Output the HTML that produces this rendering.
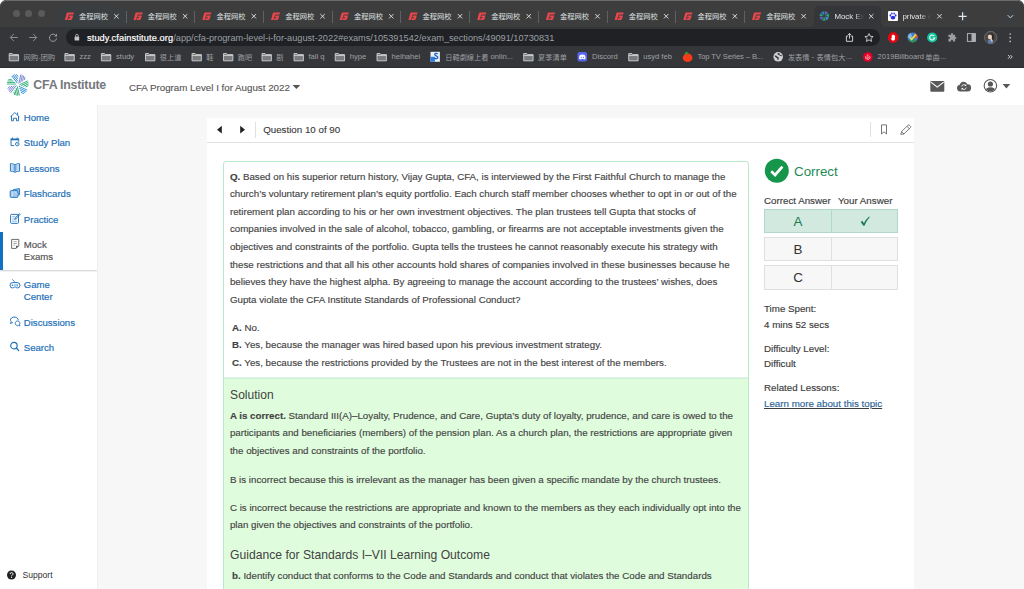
<!DOCTYPE html>
<html><head><meta charset="utf-8"><title>Mock Exams</title>
<style>
*{box-sizing:border-box}
html,body{margin:0;padding:0}
body{width:1024px;height:589px;overflow:hidden;position:relative;background:#fff;font-family:"Liberation Sans",sans-serif;font-size:9.75px;color:#333}
.ab,.cj,.t{position:absolute}
.t{white-space:nowrap;line-height:12px}
svg{display:block;overflow:visible}
.cj text{font-family:"Liberation Sans","Noto Sans CJK SC",sans-serif;font-size:100px}
#win{position:absolute;left:0;top:0;width:1024px;height:69px;background:linear-gradient(#35363a,#35363a 67px,#2a2b2e 67px,#2a2b2e 68px,#bdbdbf 68px);border-radius:6.500px 6.500px 0 0;overflow:hidden}
#hl{position:absolute;left:0;top:0;width:1024px;height:20px;border-radius:6.500px 6.500px 0 0;box-shadow:inset 0 1px 0 #6c6c6c}
#strip{position:absolute;left:0;top:0;width:1024px;height:26.5px;background:#3d3d3d}
.sep{position:absolute;top:10.7px;width:1px;height:12px;background:#5f6164}
.tl{position:absolute;top:10px;width:7.4px;height:7.4px;border-radius:50%;background:#5a5a5a}
.bk{position:absolute;top:51px;line-height:12px;font-size:7.6px;color:#9fa1a4;white-space:nowrap}
.fd{position:absolute;top:52.6px}
</style></head><body>
<svg width="0" height="0" style="position:absolute"><defs>
<path id="jc" d="M30 0H96L90 21H42L26 78H0L17 14Q21 0 30 0ZM46 31H88L78 66Q75 78 64 78H32L37 60H56L60 48H41Z" fill="#e9474c"/>
<path id="xx" d="M6 6L50 50M50 6L6 50" stroke="#dfe0e1" stroke-width="9.5" fill="none"/>
<g id="fold"><path d="M5 5h30l8 10h52v60H5z" fill="#797b7e" stroke="#cdcecf" stroke-width="9" stroke-linejoin="round"/><path d="M5 24h90" stroke="#cdcecf" stroke-width="9"/></g>
</defs></svg>

<!-- ================= browser chrome ================= -->
<div id="win">
<div id="strip"></div><div id="hl"></div>
<div class="ab" style="left:57px;top:6px;width:69px;height:21px;background:#3b3e41;border-radius:5px 5px 0 0"></div>
<div class="ab" style="left:813.5px;top:6px;width:67.2px;height:21px;background:#35363a;border-radius:5px 5px 0 0"></div><div class="ab" style="left:808.5px;top:21.500px;width:5px;height:5px;background:radial-gradient(circle at 0 0,rgba(53,54,58,0) 4.600px,#35363a 5.200px)"></div><div class="ab" style="left:880.700px;top:21.500px;width:5px;height:5px;background:radial-gradient(circle at 100% 0,rgba(53,54,58,0) 4.600px,#35363a 5.200px)"></div>
<i class="tl" style="left:12.7px"></i><i class="tl" style="left:25.1px"></i><i class="tl" style="left:37.5px"></i>
<svg class="ab" style="left:64px;top:12px;transform:translate(0.7px,0.6px)" width="9.4" height="7.4" viewBox="0 0 96 78"><use href="#jc"/></svg><svg class="cj" style="left:79px;top:12px;transform:translate(0px,0.6px)" width="29" height="7.25" viewBox="0 0 400 100" fill="#dfe0e1"><text x="0" y="88">金程网校</text></svg><svg class="ab" style="left:113px;top:13px;transform:translate(0.6px,0.45px)" width="5.6" height="5.6" viewBox="0 0 56 56"><use href="#xx"/></svg><i class="sep" style="left:125.5px"></i><svg class="ab" style="left:133px;top:12px;transform:translate(0.42px,0.6px)" width="9.4" height="7.4" viewBox="0 0 96 78"><use href="#jc"/></svg><svg class="cj" style="left:147px;top:12px;transform:translate(0.72px,0.6px)" width="29" height="7.25" viewBox="0 0 400 100" fill="#dfe0e1"><text x="0" y="88">金程网校</text></svg><svg class="ab" style="left:182px;top:13px;transform:translate(0.32px,0.45px)" width="5.6" height="5.6" viewBox="0 0 56 56"><use href="#xx"/></svg><i class="sep" style="left:194.22px"></i><svg class="ab" style="left:202px;top:12px;transform:translate(0.14px,0.6px)" width="9.4" height="7.4" viewBox="0 0 96 78"><use href="#jc"/></svg><svg class="cj" style="left:216px;top:12px;transform:translate(0.44px,0.6px)" width="29" height="7.25" viewBox="0 0 400 100" fill="#dfe0e1"><text x="0" y="88">金程网校</text></svg><svg class="ab" style="left:251px;top:13px;transform:translate(0.04px,0.45px)" width="5.6" height="5.6" viewBox="0 0 56 56"><use href="#xx"/></svg><i class="sep" style="left:262.94px"></i><svg class="ab" style="left:270px;top:12px;transform:translate(0.86px,0.6px)" width="9.4" height="7.4" viewBox="0 0 96 78"><use href="#jc"/></svg><svg class="cj" style="left:285px;top:12px;transform:translate(0.16px,0.6px)" width="29" height="7.25" viewBox="0 0 400 100" fill="#dfe0e1"><text x="0" y="88">金程网校</text></svg><svg class="ab" style="left:319px;top:13px;transform:translate(0.76px,0.45px)" width="5.6" height="5.6" viewBox="0 0 56 56"><use href="#xx"/></svg><i class="sep" style="left:331.66px"></i><svg class="ab" style="left:339px;top:12px;transform:translate(0.58px,0.6px)" width="9.4" height="7.4" viewBox="0 0 96 78"><use href="#jc"/></svg><svg class="cj" style="left:353px;top:12px;transform:translate(0.88px,0.6px)" width="29" height="7.25" viewBox="0 0 400 100" fill="#dfe0e1"><text x="0" y="88">金程网校</text></svg><svg class="ab" style="left:388px;top:13px;transform:translate(0.48px,0.45px)" width="5.6" height="5.6" viewBox="0 0 56 56"><use href="#xx"/></svg><i class="sep" style="left:400.38px"></i><svg class="ab" style="left:408px;top:12px;transform:translate(0.3px,0.6px)" width="9.4" height="7.4" viewBox="0 0 96 78"><use href="#jc"/></svg><svg class="cj" style="left:422px;top:12px;transform:translate(0.6px,0.6px)" width="29" height="7.25" viewBox="0 0 400 100" fill="#dfe0e1"><text x="0" y="88">金程网校</text></svg><svg class="ab" style="left:457px;top:13px;transform:translate(0.2px,0.45px)" width="5.6" height="5.6" viewBox="0 0 56 56"><use href="#xx"/></svg><i class="sep" style="left:469.1px"></i><svg class="ab" style="left:477px;top:12px;transform:translate(0.02px,0.6px)" width="9.4" height="7.4" viewBox="0 0 96 78"><use href="#jc"/></svg><svg class="cj" style="left:491px;top:12px;transform:translate(0.32px,0.6px)" width="29" height="7.25" viewBox="0 0 400 100" fill="#dfe0e1"><text x="0" y="88">金程网校</text></svg><svg class="ab" style="left:525px;top:13px;transform:translate(0.92px,0.45px)" width="5.6" height="5.6" viewBox="0 0 56 56"><use href="#xx"/></svg><i class="sep" style="left:537.82px"></i><svg class="ab" style="left:545px;top:12px;transform:translate(0.74px,0.6px)" width="9.4" height="7.4" viewBox="0 0 96 78"><use href="#jc"/></svg><svg class="cj" style="left:560px;top:12px;transform:translate(0.04px,0.6px)" width="29" height="7.25" viewBox="0 0 400 100" fill="#dfe0e1"><text x="0" y="88">金程网校</text></svg><svg class="ab" style="left:594px;top:13px;transform:translate(0.64px,0.45px)" width="5.6" height="5.6" viewBox="0 0 56 56"><use href="#xx"/></svg><i class="sep" style="left:606.54px"></i><svg class="ab" style="left:614px;top:12px;transform:translate(0.46px,0.6px)" width="9.4" height="7.4" viewBox="0 0 96 78"><use href="#jc"/></svg><svg class="cj" style="left:628px;top:12px;transform:translate(0.76px,0.6px)" width="29" height="7.25" viewBox="0 0 400 100" fill="#dfe0e1"><text x="0" y="88">金程网校</text></svg><svg class="ab" style="left:663px;top:13px;transform:translate(0.36px,0.45px)" width="5.6" height="5.6" viewBox="0 0 56 56"><use href="#xx"/></svg><i class="sep" style="left:675.26px"></i><svg class="ab" style="left:683px;top:12px;transform:translate(0.18px,0.6px)" width="9.4" height="7.4" viewBox="0 0 96 78"><use href="#jc"/></svg><svg class="cj" style="left:697px;top:12px;transform:translate(0.48px,0.6px)" width="29" height="7.25" viewBox="0 0 400 100" fill="#dfe0e1"><text x="0" y="88">金程网校</text></svg><svg class="ab" style="left:732px;top:13px;transform:translate(0.08px,0.45px)" width="5.6" height="5.6" viewBox="0 0 56 56"><use href="#xx"/></svg><i class="sep" style="left:743.98px"></i><svg class="ab" style="left:751px;top:12px;transform:translate(0.9px,0.6px)" width="9.4" height="7.4" viewBox="0 0 96 78"><use href="#jc"/></svg><svg class="cj" style="left:766px;top:12px;transform:translate(0.2px,0.6px)" width="29" height="7.25" viewBox="0 0 400 100" fill="#dfe0e1"><text x="0" y="88">金程网校</text></svg><svg class="ab" style="left:800px;top:13px;transform:translate(0.8px,0.45px)" width="5.6" height="5.6" viewBox="0 0 56 56"><use href="#xx"/></svg>
<!-- active tab -->
<svg class="ab" style="left:819px;top:11px;transform:translate(0.6px,0.2px)" width="9.6" height="9.6" viewBox="0 0 20 20"><path d="M8.20 10.13L0.02 10.70A10 10 0 0 1 2.34 3.57Z" fill="#2e9d72"/><path d="M8.78 8.67L3.23 2.64A10 10 0 0 1 10.25 0.00Z" fill="#2f7fc6"/><path d="M10.28 8.22L11.54 0.12A10 10 0 0 1 17.97 3.96Z" fill="#5b67b8"/><path d="M11.56 9.11L18.69 5.04A10 10 0 0 1 19.69 12.47Z" fill="#2e9d72"/><path d="M11.67 10.67L19.29 13.70A10 10 0 0 1 14.11 19.12Z" fill="#3a8fd6"/><path d="M10.52 11.72L12.90 19.57A10 10 0 0 1 5.44 18.90Z" fill="#2e9d72"/><path d="M8.98 11.48L4.33 18.23A10 10 0 0 1 0.20 11.98Z" fill="#5b67b8"/></svg>
<div class="t" style="left:834.4px;top:10.8px;font-size:7.9px;color:#e4e5e6;width:30px;overflow:hidden;-webkit-mask-image:linear-gradient(90deg,#000 68%,transparent 100%);mask-image:linear-gradient(90deg,#000 68%,transparent 100%)">Mock Exa</div>
<svg class="ab" style="left:868px;top:13px;transform:translate(0.4px,0.45px)" width="5.6" height="5.6" viewBox="0 0 56 56"><use href="#xx"/></svg>
<!-- private tab -->
<svg class="ab" style="left:888px;top:11px" width="10" height="10" viewBox="0 0 20 20"><rect width="20" height="20" rx="2" fill="#fff"/><g fill="#2932e1"><ellipse cx="10" cy="13.3" rx="4.6" ry="3.6"/><ellipse cx="4.6" cy="9" rx="1.7" ry="2.3"/><ellipse cx="15.4" cy="9" rx="1.7" ry="2.3"/><ellipse cx="7.7" cy="5.2" rx="1.6" ry="2.2"/><ellipse cx="12.3" cy="5.2" rx="1.6" ry="2.2"/></g></svg>
<div class="t" style="left:902.4px;top:10.8px;font-size:7.9px;color:#e4e5e6;width:29px;overflow:hidden;-webkit-mask-image:linear-gradient(90deg,#000 62%,transparent 100%);mask-image:linear-gradient(90deg,#000 62%,transparent 100%)">private c</div>
<svg class="ab" style="left:936px;top:13px;transform:translate(0.7px,0.45px)" width="5.6" height="5.6" viewBox="0 0 56 56"><use href="#xx"/></svg>
<!-- new tab / chevron -->
<div class="ab" style="left:955.6px;top:9.3px;width:14px;height:14px;border-radius:50%;background:#3b3e41"></div>
<svg class="ab" style="left:958px;top:12px;transform:translate(0.6px,0.3px)" width="8" height="8" viewBox="0 0 8 8"><path d="M4 0V8M0 4H8" stroke="#e4e5e6" stroke-width="1.2" fill="none"/></svg>
<div class="ab" style="left:1002.9px;top:8.5px;width:15px;height:15px;border-radius:50%;background:#3b3e41"></div>
<svg class="ab" style="left:1007px;top:14px;transform:translate(0.4px,0.9px)" width="6" height="3.6" viewBox="0 0 6 3.6"><path d="M.3 .3L3 3L5.7 .3" stroke="#d5d6d8" stroke-width="1" fill="none"/></svg>

<!-- toolbar -->
<svg class="ab" style="left:9px;top:33px;transform:translate(0.6px,0.4px)" width="8.4" height="8.2" viewBox="0 0 8.4 8.2"><path d="M8.2 4.1H.8M4.3 .5L.7 4.1L4.3 7.7" stroke="#8f9194" stroke-width="1" fill="none"/></svg>
<svg class="ab" style="left:29px;top:33px;transform:translate(0px,0.4px)" width="8.4" height="8.2" viewBox="0 0 8.4 8.2"><path d="M.2 4.1H7.6M4.1 .5L7.7 4.1L4.1 7.7" stroke="#8f9194" stroke-width="1" fill="none"/></svg>
<svg class="ab" style="left:48px;top:33px;transform:translate(0.6px,0px)" width="9" height="9" viewBox="0 0 9 9"><path d="M7.6 3A3.6 3.6 0 1 0 8 5.4" stroke="#9a9c9f" stroke-width="1" fill="none"/><path d="M8.4 .6V3.4H5.6Z" fill="#9a9c9f"/></svg>
<div class="ab" style="left:66px;top:29px;width:813.8px;height:17px;border-radius:8.5px;background:#202124"></div>
<svg class="ab" style="left:74px;top:33px;transform:translate(0.6px,0.4px)" width="4.6" height="7.4" viewBox="0 0 4.6 7.4"><path d="M1 3.2V2.2A1.3 1.3 0 0 1 3.6 2.2V3.2" stroke="#c3c5c8" stroke-width=".8" fill="none"/><rect x="0" y="3" width="4.6" height="4.2" rx=".5" fill="#c3c5c8"/></svg>
<div class="t" id="url" style="left:87px;top:31.5px;font-size:9.200px;color:#9aa0a6;letter-spacing:0"><span style="color:#fff;letter-spacing:.12px;-webkit-text-stroke:.2px #fff">study.cfainstitute.org</span>/app/cfa-program-level-i-for-august-2022#exams/105391542/exam_sections/49091/10730831</div>
<!-- share -->
<svg class="ab" style="left:845px;top:32px;transform:translate(0.9px,0.9px)" width="7.200" height="8.900" viewBox="0 0 7.6 9.4"><path d="M2.4 3.4H.5V8.9H7.1V3.4H5.2M3.8 6V.8M2 2.4L3.8 .6L5.6 2.4" stroke="#dcdde0" stroke-width=".95" fill="none"/></svg>
<!-- star -->
<svg class="ab" style="left:864px;top:32px;transform:translate(0.2px,0.7px)" width="9.6" height="9.2" viewBox="0 0 24 23"><path d="M12 2.2L15 9l7.3.7-5.5 4.9 1.6 7.2L12 18l-6.4 3.8 1.6-7.2L1.7 9.7 9 9z" stroke="#dcdde0" stroke-width="2.100" fill="none" stroke-linejoin="round"/></svg>
<!-- ext icons -->
<svg class="ab" style="left:888px;top:32px;transform:translate(0px,0.3px)" width="10.4" height="10.4" viewBox="0 0 20 20"><path d="M6 0h8l6 6v8l-6 6H6l-6-6V6z" fill="#e30613"/><path d="M7.2 10V6.2a.8.8 0 0 1 1.6 0V4.8a.8.8 0 0 1 1.6 0V5.4a.8.8 0 0 1 1.6 0V6.6a.8.8 0 0 1 1.6 0V12c0 2.4-1.4 4-3.6 4-2 0-2.8-1-4.6-4.2.6-.8 1.2-.6 1.8.2z" fill="#fff"/></svg>
<svg class="ab" style="left:907px;top:32px;transform:translate(0.6px,0.4px)" width="10.2" height="10.2" viewBox="0 0 20 20"><circle cx="10" cy="10" r="10" fill="#3b7dd8"/><path d="M0 10a10 10 0 0 1 6-9l4 9z" fill="#7fb4e8"/><path d="M14 1.2a10 10 0 0 1 6 8.800l-8 2z" fill="#e8552d"/><path d="M3 17a10 10 0 0 0 14 0l-7-5z" fill="#2f8f4e"/><path d="M4 9.500l4 4.500 8-10" stroke="#d9e94a" stroke-width="3.200" fill="none"/></svg>
<svg class="ab" style="left:927px;top:32px;transform:translate(0.1px,0.4px)" width="10.2" height="10.2" viewBox="0 0 20 20"><circle cx="10" cy="10" r="10" fill="#15c39a"/><path d="M14.300 7.200A5 5 0 1 0 15 11H11" stroke="#fff" stroke-width="2" fill="none"/></svg>
<svg class="ab" style="left:947px;top:32px;transform:translate(0.2px,0.8px)" width="9.6" height="9.6" viewBox="0 0 20 20"><path d="M8 2.500a2 2 0 0 1 4 0V4h4.500v4.500h1a2 2 0 0 1 0 4h-1V18H12v-1.500a2 2 0 0 0-4 0V18H2.500v-5.500H4a2 2 0 0 0 0-4H2.500V4H8z" fill="#9a9c9f"/></svg>
<svg class="ab" style="left:966px;top:33px;transform:translate(0.9px,0.1px)" width="9" height="8.800" viewBox="0 0 9 8.800"><rect x=".5" y=".5" width="8" height="7.800" fill="none" stroke="#aeb0b3" stroke-width="1"/><rect x="4.600" y=".5" width="4" height="7.800" fill="#aeb0b3"/></svg>
<svg class="ab" style="left:984px;top:31px;transform:translate(0.2px,0px)" width="13" height="13" viewBox="0 0 26 26"><circle cx="13" cy="13" r="12.500" fill="#4a4744" stroke="#8a8a8a" stroke-width="1"/><path d="M9 6c3-3 9-2 10 3 1 3 0 6-1 9l-6 1c-3-2-5-8-3-13z" fill="#2b2624"/><ellipse cx="11.500" cy="12" rx="4.200" ry="4.800" fill="#ecd2c0"/><path d="M7 19c3-2.500 8-2.500 11 0l-1 6H9z" fill="#5d7fb8"/><path d="M12 15.500l3 6 2-1-2-6z" fill="#ecd2c0"/></svg>
<svg class="ab" style="left:1009px;top:33px;transform:translate(0.2px,0px)" width="2" height="9.400" viewBox="0 0 2 9.400"><circle cx="1" cy="1" r=".85" fill="#b9babd"/><circle cx="1" cy="4.700" r=".85" fill="#b9babd"/><circle cx="1" cy="8.400" r=".85" fill="#b9babd"/></svg>

<!-- bookmarks bar -->
<svg class="fd" style="left:8px;transform:translate(0.7px,0px)" width="10.400" height="8.400" viewBox="0 0 100 80"><use href="#fold"/></svg>
<svg class="cj" style="left:23px;top:53px;transform:translate(0.4px,0.3px)" width="14.8" height="7.4" viewBox="0 0 200 100" fill="#9d9fa2"><text x="0" y="88">网购</text></svg><div class="bk" style="left:38.400px">.</div><svg class="cj" style="left:40px;top:53px;transform:translate(0.4px,0.3px)" width="14.8" height="7.4" viewBox="0 0 200 100" fill="#9d9fa2"><text x="0" y="88">团购</text></svg>
<svg class="fd" style="left:64px;transform:translate(0.4px,0px)" width="10.400" height="8.400" viewBox="0 0 100 80"><use href="#fold"/></svg>
<div class="bk" style="left:79.500px">zzz</div>
<svg class="fd" style="left:100px;transform:translate(0.9px,0px)" width="10.400" height="8.400" viewBox="0 0 100 80"><use href="#fold"/></svg>
<div class="bk" style="left:116px">study</div>
<svg class="fd" style="left:145px" width="10.400" height="8.400" viewBox="0 0 100 80"><use href="#fold"/></svg>
<svg class="cj" style="left:159px;top:53px;transform:translate(0.8px,0.3px)" width="21.6" height="7.2" viewBox="0 0 300 100" fill="#9d9fa2"><text x="0" y="88">很上道</text></svg>
<svg class="fd" style="left:191px;transform:translate(0.5px,0px)" width="10.400" height="8.400" viewBox="0 0 100 80"><use href="#fold"/></svg>
<svg class="cj" style="left:206px;top:53px;transform:translate(0.3px,0.3px)" width="7.2" height="7.2" viewBox="0 0 100 100" fill="#9d9fa2"><text x="0" y="88">鞋</text></svg>
<svg class="fd" style="left:223px" width="10.400" height="8.400" viewBox="0 0 100 80"><use href="#fold"/></svg>
<svg class="cj" style="left:237px;top:53px;transform:translate(0.8px,0.3px)" width="14.4" height="7.2" viewBox="0 0 200 100" fill="#9d9fa2"><text x="0" y="88">跑吧</text></svg>
<svg class="fd" style="left:261px;transform:translate(0.5px,0px)" width="10.400" height="8.400" viewBox="0 0 100 80"><use href="#fold"/></svg>
<svg class="cj" style="left:276px;top:53px;transform:translate(0.3px,0.3px)" width="7.2" height="7.2" viewBox="0 0 100 100" fill="#9d9fa2"><text x="0" y="88">剧</text></svg>
<svg class="fd" style="left:293px;transform:translate(0.5px,0px)" width="10.400" height="8.400" viewBox="0 0 100 80"><use href="#fold"/></svg>
<div class="bk" style="left:308.500px">fall q</div>
<svg class="fd" style="left:334px;transform:translate(0.7px,0px)" width="10.400" height="8.400" viewBox="0 0 100 80"><use href="#fold"/></svg>
<div class="bk" style="left:349.700px">hype</div>
<svg class="fd" style="left:376px;transform:translate(0.5px,0px)" width="10.400" height="8.400" viewBox="0 0 100 80"><use href="#fold"/></svg>
<div class="bk" style="left:391.500px">heihahei</div>
<svg class="ab" style="left:430px;top:51px;transform:translate(0.5px,0.8px)" width="9.400" height="10" viewBox="0 0 9.400 10"><rect width="9.400" height="10" fill="#e9f1fb"/><rect x="0" y="5" width="4.400" height="5" fill="#2b7de0"/><path d="M7.200 2.200C6.200 1.200 4.200 1.400 4.200 2.800C4.200 4.400 7.300 3.800 7.300 5.600C7.300 7.200 5 7.300 3.900 6.300" stroke="#1f5fbf" stroke-width="1.300" fill="none"/></svg>
<svg class="cj" style="left:445px;top:53px;transform:translate(0.3px,0.3px)" width="43.2" height="7.2" viewBox="0 0 600 100" fill="#9d9fa2"><text x="0" y="88">日韓劇線上看</text></svg><div class="bk" style="left:490.600px">onlin...</div>
<svg class="fd" style="left:523px;transform:translate(0.2px,0px)" width="10.400" height="8.400" viewBox="0 0 100 80"><use href="#fold"/></svg>
<svg class="cj" style="left:538px;top:53px;transform:translate(0.1px,0.3px)" width="28.8" height="7.2" viewBox="0 0 400 100" fill="#9d9fa2"><text x="0" y="88">夏季清单</text></svg>
<svg class="ab" style="left:577px;top:52px;transform:translate(0.5px,0px)" width="9.600" height="9.600" viewBox="0 0 20 20"><rect width="20" height="20" rx="4.500" fill="#5865f2"/><path d="M5 6.500c3-1.600 7-1.600 10 0 1.400 2.300 2 5 1.800 7.500-1.200 1-2.400 1.400-3.500 1.600l-.8-1.400c-1.600.5-3.400.5-5 0l-.8 1.400C5.600 15.400 4.400 15 3.200 14 3 11.500 3.600 8.800 5 6.500z" fill="#fff"/><circle cx="7.700" cy="11" r="1.300" fill="#5865f2"/><circle cx="12.300" cy="11" r="1.300" fill="#5865f2"/></svg>
<div class="bk" style="left:592px">Discord</div>
<svg class="fd" style="left:628px;transform:translate(0.2px,0px)" width="10.400" height="8.400" viewBox="0 0 100 80"><use href="#fold"/></svg>
<div class="bk" style="left:643.200px">usyd feb</div>
<svg class="ab" style="left:682px;top:51px;transform:translate(0.6px,0.6px)" width="10" height="10.400" viewBox="0 0 20 21"><ellipse cx="10" cy="12.400" rx="9.800" ry="8.600" fill="#f23c1a"/><path d="M3.500 4.500Q6 1 8.500 .5Q10 2 12.500 3Q10.500 5.500 8 5Q5.500 6.500 3.500 4.500Z" fill="#2f9a3a"/></svg>
<div class="bk" style="left:697.500px;letter-spacing:-.1px">Top TV Series – B...</div>
<svg class="ab" style="left:773px;top:52px;transform:translate(0.4px,0px)" width="9.600" height="9.600" viewBox="0 0 20 20"><circle cx="10" cy="10" r="10" fill="#cfd1d3"/><path d="M2.500 7.500Q5 6.500 6.500 8T9.500 10.500Q12 11 11.500 13T9.500 17Q8 16 8 14T5 11.500Q2.500 10 2.500 7.500ZM9 2Q11 1.500 13 2.500Q12 4.500 13.500 5.500T17 6.500Q18 8.500 17 9Q14.500 9 13 7.500T9.500 5.500Q8 4 9 2Z" fill="#3a3b3f"/></svg>
<svg class="cj" style="left:787px;top:53px;transform:translate(0.9px,0.3px)" width="21.6" height="7.2" viewBox="0 0 300 100" fill="#9d9fa2"><text x="0" y="88">发表情</text></svg><div class="bk" style="left:811.400px">-</div><svg class="cj" style="left:816px;top:53px;transform:translate(0.6px,0.3px)" width="28.8" height="7.2" viewBox="0 0 400 100" fill="#9d9fa2"><text x="0" y="88">表情包大</text></svg><div class="bk" style="left:845.800px">...</div>
<svg class="ab" style="left:863px;top:52px;transform:translate(0px,0.2px)" width="9.600" height="9.600" viewBox="0 0 20 20"><circle cx="10" cy="10" r="10" fill="#e60026"/><path d="M10 4.500v5.500M7 7.500c-2 1.500-2 5 0 6.500 1.800 1.300 4.200 1.300 6 0 2-1.500 2-5 0-6.500M8 10.500c0 3 4 3 4 0" stroke="#fff" stroke-width="1.400" fill="none"/></svg>
<div class="bk" style="left:877.600px">2019Billboard</div><svg class="cj" style="left:925px;top:53px;transform:translate(0.3px,0.3px)" width="14.4" height="7.2" viewBox="0 0 200 100" fill="#9d9fa2"><text x="0" y="88">单曲</text></svg><div class="bk" style="left:939.900px">...</div>
<svg class="ab" style="left:1007px;top:54px;transform:translate(0.6px,0.6px)" width="5" height="4.600" viewBox="0 0 5 4.600"><path d="M.4 .4L2.200 2.300L.4 4.200M2.800 .4L4.600 2.300L2.800 4.200" stroke="#dcdde0" stroke-width=".9" fill="none"/></svg>
</div>

<!-- ================= page ================= -->
<div id="page">
<style>
#hdr{position:absolute;left:0;top:68px;width:1024px;height:37px;background:#fff}
#side{position:absolute;left:0;top:105px;width:98px;height:484px;background:#fff;border-right:1px solid #f0f0f0}
#main{position:absolute;left:98px;top:105px;width:926px;height:484px;background:#f7f7f7}
#panel{position:absolute;left:207.300px;top:118.200px;width:706.500px;height:480px;background:#fff}
.nv{position:absolute;left:23.800px;color:#1b6fb7;line-height:12.300px;white-space:nowrap;font-size:9.600px;-webkit-text-stroke:.18px #1b6fb7}
.ni{position:absolute;left:10.200px}
.q{position:absolute;left:229.900px;white-space:nowrap;line-height:17.560px;font-size:9.750px;color:#444;-webkit-text-stroke:.15px #444}
.r{position:absolute;left:764px;white-space:nowrap;line-height:12px;font-size:9.750px;color:#3c3c3c;-webkit-text-stroke:.15px #3c3c3c}
.cell{position:absolute;height:24.400px;border:1px solid #e0e0e0;background:#f7f7f7;text-align:center;font-size:13.400px;line-height:23.600px;color:#333}
b{font-weight:bold}
</style>
<div id="hdr"></div>
<div id="main"></div>
<div id="side"></div>
<div id="panel"></div>

<!-- header -->
<svg class="ab" id="logo" style="left:6px;top:74px;transform:translate(0.95px,0px)" width="21.600" height="21.600" viewBox="-50 -50 100 100"><g stroke-width="4.500" fill="none"><path d="M-7.0 -3.5L-49.5 -3.5M-13.0 -10.6L-49.5 -10.6M-20.0 -17.7L-47.0 -17.7M-28.0 -24.8L-43.0 -24.8" stroke="#3eb687"/><path d="M-1.6 -7.7L-28.1 -40.9M0.2 -16.8L-22.6 -45.3M1.4 -26.7L-15.5 -47.8M1.9 -37.4L-7.4 -49.1" stroke="#2a86d2"/><path d="M5.0 -6.0L14.4 -47.5M13.2 -10.3L21.3 -45.9M21.7 -15.6L27.7 -41.9M30.4 -21.8L33.7 -36.4" stroke="#7583d3"/><path d="M7.8 0.1L46.1 -18.3M16.3 3.9L49.2 -11.9M25.7 7.3L50.0 -4.4M36.0 10.2L49.5 3.7" stroke="#2aa876"/><path d="M4.8 6.2L43.1 24.6M7.1 15.2L40.0 31.0M10.3 24.6L34.7 36.3M14.5 34.5L28.0 41.0" stroke="#3393dc"/><path d="M-1.9 7.6L7.6 49.0M-7.4 15.0L0.7 50.6M-12.8 23.4L-6.8 49.8M-17.9 32.8L-14.6 47.4" stroke="#2aa876"/><path d="M-7.1 3.3L-33.6 36.5M-16.4 3.6L-39.2 32.1M-26.3 4.6L-43.1 25.7M-36.8 6.4L-46.2 18.2" stroke="#6e7ed0"/></g></svg>
<div class="t" id="brand" style="left:33.300px;top:78px;font-size:12.400px;line-height:15px;font-weight:bold;color:#75787d;letter-spacing:-.25px">CFA Institute</div>
<div class="t" id="ttl" style="left:128.900px;top:81.800px;font-size:9.750px;color:#555;-webkit-text-stroke:.12px #555">CFA Program Level I for August 2022</div>
<svg class="ab" style="left:292px;top:84px;transform:translate(0.5px,0.9px)" width="7.800" height="4.200" viewBox="0 0 7.800 4.200"><path d="M0 0H7.800L3.900 4.200Z" fill="#555"/></svg>
<svg class="ab" style="left:930px;top:80px;transform:translate(0.3px,0.9px)" width="14" height="10.800" viewBox="0 0 14 10.800"><rect width="14" height="10.800" rx="1" fill="#585858"/><path d="M.6 1.200L7 6.200L13.400 1.200" stroke="#fff" stroke-width="1.200" fill="none"/></svg>
<svg class="ab" style="left:956px;top:81px;transform:translate(0.8px,0px)" width="14.200" height="10.400" viewBox="0 0 28 20.500"><path d="M7 20.500a6.500 6.500 0 0 1-1.200-12.900A8 8 0 0 1 21 6.500a7 7 0 0 1 .5 14z" fill="#585858"/><path d="M9.500 11a4.600 4.600 0 0 1 8-2.200M18.500 13a4.600 4.600 0 0 1-8 2.200" stroke="#fff" stroke-width="1.700" fill="none"/><path d="M18.600 6v4h-4zM9.400 18v-4h4z" fill="#fff"/></svg>
<svg class="ab" style="left:983px;top:78px;transform:translate(0.6px,0.9px)" width="13.600" height="13.600" viewBox="0 0 27.200 27.200"><defs><clipPath id="uc"><circle cx="13.600" cy="13.600" r="11.200"/></clipPath></defs><circle cx="13.600" cy="13.600" r="12.500" fill="#fff" stroke="#585858" stroke-width="2.200"/><g clip-path="url(#uc)" fill="#585858"><circle cx="13.600" cy="10.200" r="5.200"/><path d="M2 28c0-8 5-11.500 11.600-11.500S25.200 20 25.200 28z"/></g></svg>
<svg class="ab" style="left:1002px;top:83px;transform:translate(0.6px,0.9px)" width="7.600" height="4.500" viewBox="0 0 7.600 4.500"><path d="M0 0H7.600L3.800 4.500Z" fill="#585858"/></svg>

<!-- sidebar -->
<div class="ab" style="left:0;top:231.700px;width:97px;height:38px;overflow:visible;background:#fff;box-shadow:0 1px 1.500px rgba(0,0,0,.2);clip-path:inset(0 0 -4px 0)"></div>
<div class="ab" style="left:0;top:231.700px;width:3.200px;height:38px;background:#1371c4"></div>
<div class="nv" style="top:111.700px">Home</div>
<div class="nv" style="top:137px">Study Plan</div>
<div class="nv" style="top:163px">Lessons</div>
<div class="nv" style="top:187.800px">Flashcards</div>
<div class="nv" style="top:213.700px">Practice</div>
<div class="nv" style="top:238.600px;color:#555;-webkit-text-stroke-color:#555;line-height:12.500px">Mock<br>Exams</div>
<div class="nv" style="top:278.800px">Game<br>Center</div>
<div class="nv" style="top:316.700px">Discussions</div>
<div class="nv" style="top:341.500px">Search</div>

<svg class="ab" style="left:10px;top:112px;transform:translate(0.1px,0.1px)" width="9.600" height="9.200" viewBox="0 0 9.600 9.200"><path d="M.3 4.800L4.750 .5L9.300 4.800M1.400 4V8.700H3.300V6.200H6.400V8.700H8.400V4M7.500 .4V2.600" stroke="#1b6fb7" stroke-width=".95" fill="none" stroke-linejoin="round"/></svg>
<svg class="ab" style="left:10px;top:137px;transform:translate(0.1px,0.3px)" width="9.600" height="9.200" viewBox="0 0 9.600 9.200"><path d="M.9 1.200H8.600V3H.9Z" fill="#1b6fb7"/><path d="M.9 1.200V8.300H4M8.600 1.200V4.400M2.400 .2V1.500M7.100 .2V1.500" stroke="#1b6fb7" stroke-width=".95" fill="none"/><circle cx="7.200" cy="6.800" r="1.800" stroke="#1b6fb7" stroke-width=".9" fill="none"/><path d="M7.200 5.900V6.900H8" stroke="#1b6fb7" stroke-width=".5" fill="none"/></svg>
<svg class="ab" style="left:9px;top:162px;transform:translate(0.9px,0.8px)" width="10.200" height="9.800" viewBox="0 0 10.200 9.800"><path d="M1.500 2Q3.500 1.900 5.100 3Q6.700 1.900 8.700 2V7.400Q6.700 7.300 5.100 8.300Q3.500 7.300 1.500 7.400Z" fill="#9cc4ec"/><path d="M.5 .9Q3 .7 5.100 2Q7.200 .7 9.700 .9V8.400Q7.200 8.200 5.100 9.500Q3 8.200 .5 8.400Z" stroke="#1b6fb7" stroke-width=".95" fill="none" stroke-linejoin="round"/><path d="M5.100 2.200V9.200" stroke="#1b6fb7" stroke-width=".8"/><path d="M2.700 2.600V7M7.500 2.600V7" stroke="#fff" stroke-width=".6" opacity=".7"/></svg>
<svg class="ab" style="left:9px;top:188px;transform:translate(0.7px,0.1px)" width="10.400" height="9.800" viewBox="0 0 10.400 9.800"><path d="M3.400 1.600L9.400 .5Q9.900 .4 9.900 1V6.400Q9.900 6.900 9.400 6.900H8.300" stroke="#1b6fb7" stroke-width=".9" fill="#a2c8ee"/><rect x=".5" y="2.500" width="7.800" height="6.800" rx="1" stroke="#1b6fb7" stroke-width=".9" fill="#a2c8ee"/><path d="M2.600 3.400V8.200" stroke="#fff" stroke-width=".7" opacity=".8"/><path d="M4.400 2.800L8 6.300" stroke="#dbeaf8" stroke-width=".8"/></svg>
<svg class="ab" style="left:10px;top:212px;transform:translate(0.1px,0.7px)" width="10.400" height="11.200" viewBox="0 0 10.400 11.200"><rect x=".5" y="1.700" width="7.900" height="9" rx="1" stroke="#1b6fb7" stroke-width=".95" fill="none"/><path d="M2 3.800H5.200M2 5.400H4.200M2 7.200H6.800M2 8.900H6.800" stroke="#8ab8e6" stroke-width=".8"/><path d="M9.700 .6L5 5.400L4.600 6.600L5.800 6.200L10.200 1.400" stroke="#1b6fb7" stroke-width=".9" fill="none"/></svg>
<svg class="ab" style="left:11px;top:238px;transform:translate(0.1px,0.9px)" width="8.200" height="10" viewBox="0 0 8.200 10"><path d="M.5 .5H7.700V6.800L5 9.500H.5Z" stroke="#666" stroke-width=".95" fill="none"/><path d="M7.700 6.800H5V9.500Z" fill="#555"/><path d="M2.300 2.800H5.800M2.300 4.600H5.800M2.300 6.400H4" stroke="#999" stroke-width=".8"/></svg>
<svg class="ab" style="left:9px;top:279px;transform:translate(0.5px,0px)" width="11" height="9.600" viewBox="0 0 11 9.600"><path d="M2.800 .3L4.800 2.500L5.700 3.400" stroke="#1b6fb7" stroke-width=".8" fill="none"/><path d="M3.200 3.600H7.800A2.700 2.700 0 0 1 7.800 9Q6.900 9 6.300 8H4.700Q4.100 9 3.200 9A2.700 2.700 0 0 1 3.200 3.600Z" stroke="#1b6fb7" stroke-width=".95" fill="none"/><circle cx="3" cy="6.200" r=".8" fill="#1b6fb7"/><path d="M4.400 5.200H7.400V7.300H4.400Z" fill="#a6c9ec"/><path d="M7.900 4.800V7.600" stroke="#1b6fb7" stroke-width=".6"/></svg>
<svg class="ab" style="left:9px;top:316px;transform:translate(0.9px,0.4px)" width="10.600" height="10.400" viewBox="0 0 10.600 10.400"><path d="M8.300 3.800A3.900 2.900 0 1 0 1.300 5.300L.6 7L3 6.200" stroke="#1b6fb7" stroke-width=".95" fill="none" stroke-linejoin="round"/><path d="M7.800 4.600A2.300 2.300 0 1 0 8.600 9L10 9.600L9.600 8.200A2.300 2.300 0 0 0 7.800 4.600Z" stroke="#1b6fb7" stroke-width=".9" fill="none"/></svg>
<svg class="ab" style="left:9px;top:341px;transform:translate(0.9px,0.6px)" width="9.600" height="9.600" viewBox="0 0 9.600 9.600"><circle cx="4.050" cy="4.050" r="3.200" stroke="#1b6fb7" stroke-width="1.150" fill="none"/><path d="M6.400 6.400L8.800 9" stroke="#1b6fb7" stroke-width="1.300" stroke-linecap="round"/></svg>

<svg class="ab" style="left:7px;top:570px;transform:translate(0px,0.5px)" width="9" height="9" viewBox="0 0 18 18"><circle cx="9" cy="9" r="9" fill="#222"/><path d="M6.300 7a2.800 2.800 0 1 1 4.200 2.400c-1 .6-1.400 1-1.400 2.200" stroke="#fff" stroke-width="2" fill="none"/><circle cx="9.100" cy="14" r="1.200" fill="#fff"/></svg>
<div class="t" id="sup" style="left:22.500px;top:568.600px;font-size:8.600px;color:#333">Support</div>

<!-- panel toolbar -->
<div class="ab" style="left:207.300px;top:141.800px;width:706.500px;height:1px;background:#e2e2e2"></div>
<svg class="ab" style="left:217px;top:125px;transform:translate(0px,0.8px)" width="4.800" height="7.800" viewBox="0 0 4.800 7.800"><path d="M4.800 0V7.800L0 3.900Z" fill="#222"/></svg>
<svg class="ab" style="left:240px;top:125px;transform:translate(0.2px,0.8px)" width="4.800" height="7.800" viewBox="0 0 4.800 7.800"><path d="M0 0V7.800L4.800 3.900Z" fill="#222"/></svg>
<div class="ab" style="left:254.500px;top:122px;width:1px;height:16px;background:#e0e0e0"></div>
<div class="t" id="qn" style="left:263.200px;top:123.600px;font-size:9.750px;color:#3a3a3a;-webkit-text-stroke:.12px #3a3a3a">Question 10 of 90</div>
<div class="ab" style="left:870.200px;top:122.300px;width:1px;height:15px;background:#e0e0e0"></div>
<svg class="ab" style="left:881px;top:124px;transform:translate(0px,0.4px)" width="6" height="10.400" viewBox="0 0 6 10.400"><path d="M.5 .5H5.500V9.600L3 7.400L.5 9.600Z" stroke="#666" stroke-width=".9" fill="none"/></svg>
<svg class="ab" style="left:900px;top:124px;transform:translate(0.2px,0.4px)" width="11" height="10.600" viewBox="0 0 11 10.600"><path d="M.6 10L1.400 7.200L7.800 .8A1 1 0 0 1 9.300 .8L10.200 1.700A1 1 0 0 1 10.200 3.200L3.800 9.600ZM6.800 1.900L9.100 4.200M1.400 7.200L3.800 9.600" stroke="#666" stroke-width=".85" fill="none" stroke-linejoin="round"/></svg>

<!-- question box -->
<div class="ab" style="left:223px;top:161px;width:526px;height:440px;border:1px solid #b8e9cb;border-radius:3px;background:#fff"></div>
<div class="ab" style="left:224px;top:377px;width:524px;height:220px;background:linear-gradient(#e0f3e7,#e0f3e7 1px,#d0f0d6 1px,#d0f0d6 2px,#dffddd 2px)"></div>
<div class="q" id="q1" style="top:167.700px"><b>Q.</b> Based on his superior return history, Vijay Gupta, CFA, is interviewed by the First Faithful Church to manage the<br>church’s voluntary retirement plan’s equity portfolio. Each church staff member chooses whether to opt in or out of the<br>retirement plan according to his or her own investment objectives. The plan trustees tell Gupta that stocks of<br>companies involved in the sale of alcohol, tobacco, gambling, or firearms are not acceptable investments given the<br>objectives and constraints of the portfolio. Gupta tells the trustees he cannot reasonably execute his strategy with<br>these restrictions and that all his other accounts hold shares of companies involved in these businesses because he<br>believes they have the highest alpha. By agreeing to manage the account according to the trustees’ wishes, does<br>Gupta violate the CFA Institute Standards of Professional Conduct?</div>
<div class="q" id="q2" style="left:232px;top:318.900px"><b>A.</b> No.<br><b>B.</b> Yes, because the manager was hired based upon his previous investment strategy.<br><b>C.</b> Yes, because the restrictions provided by the Trustees are not in the best interest of the members.</div>
<div class="t" id="sol" style="left:230.100px;top:387.900px;font-size:12.050px;line-height:14px;color:#424242">Solution</div>
<div class="q" id="s1" style="top:406.500px"><b>A is correct.</b> Standard III(A)–Loyalty, Prudence, and Care, Gupta’s duty of loyalty, prudence, and care is owed to the<br>participants and beneficiaries (members) of the pension plan. As a church plan, the restrictions are appropriate given<br>the objectives and constraints of the portfolio.</div>
<div class="q" id="s2" style="top:470.800px">B is incorrect because this is irrelevant as the manager has been given a specific mandate by the church trustees.</div>
<div class="q" id="s3" style="top:498.900px">C is incorrect because the restrictions are appropriate and known to the members as they each individually opt into the<br>plan given the objectives and constraints of the portfolio.</div>
<div class="t" id="gd" style="left:230.100px;top:548.400px;font-size:12.150px;line-height:14px;color:#424242">Guidance for Standards I–VII Learning Outcome</div>
<div class="q" id="s4" style="left:232px;top:566.900px"><b>b.</b> Identify conduct that conforms to the Code and Standards and conduct that violates the Code and Standards</div>

<!-- right column -->
<svg class="ab" style="left:764px;top:158px;transform:translate(0.8px,0.7px)" width="24" height="24" viewBox="0 0 24 24"><circle cx="12" cy="12" r="12" fill="#15964a"/><path d="M6.400 12.600L10.300 16.300L17.600 7.900" stroke="#fff" stroke-width="2.700" fill="none"/></svg>
<div class="t" id="cor" style="left:794.100px;top:163.600px;font-size:13.300px;line-height:16px;color:#1b8a57">Correct</div>
<div class="r" id="ca" style="top:194.700px">Correct Answer</div>
<div class="r" id="ya" style="left:838px;top:194.700px">Your Answer</div>
<div class="cell" style="left:764.200px;top:208.800px;width:67.700px;background:#d1e9df;border-color:#b0d9c8;color:#1b7a52">A</div>
<div class="cell" style="left:830.900px;top:208.800px;width:67.400px;background:#d1e9df;border-color:#b0d9c8"></div>
<svg class="ab" style="left:860px;top:216px;transform:translate(0.4px,0.3px)" width="9.400" height="9.600" viewBox="0 0 9.400 9.600"><path d="M.3 5.700L1.900 4.500L3.500 6.900C4.900 4.200 6.600 1.900 8.800 .1L9.400 .8C7.200 3.200 5.500 6.100 4.100 9.500H3Z" fill="#1b7a52"/></svg>
<div class="cell" style="left:764.200px;top:237.100px;width:67.700px">B</div>
<div class="cell" style="left:830.900px;top:237.100px;width:67.400px"></div>
<div class="cell" style="left:764.200px;top:265.400px;width:67.700px">C</div>
<div class="cell" style="left:830.900px;top:265.400px;width:67.400px"></div>
<div class="r" style="top:303.400px">Time Spent:</div>
<div class="r" style="top:318.700px">4 mins 52 secs</div>
<div class="r" style="top:342.600px">Difficulty Level:</div>
<div class="r" style="top:358.200px">Difficult</div>
<div class="r" style="top:381.800px">Related Lessons:</div>
<div class="r" id="lm" style="top:397.600px;color:#1b6fb7;text-decoration:underline">Learn more about this topic</div>
</div>
</body></html>
